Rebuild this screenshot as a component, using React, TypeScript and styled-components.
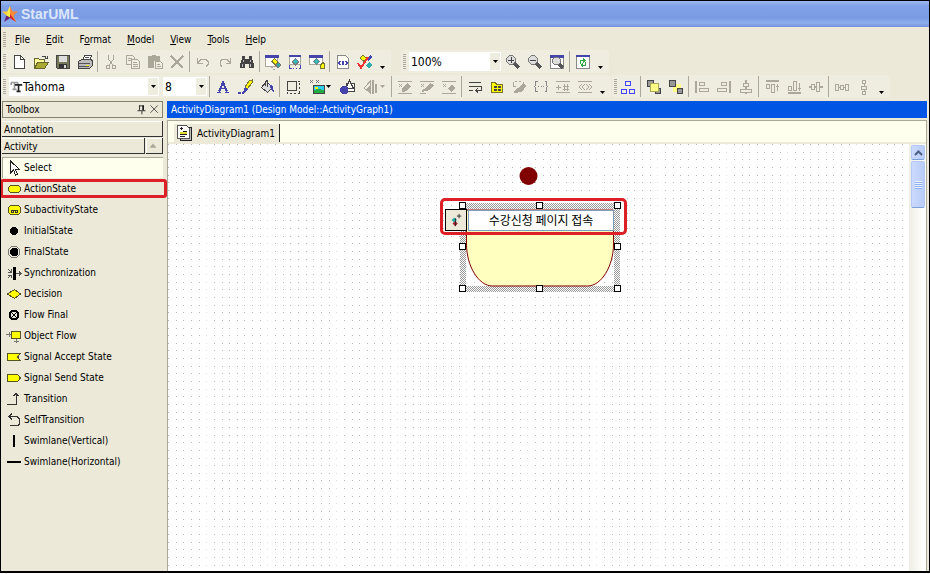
import React from "react";
import styled, { createGlobalStyle } from "styled-components";

const face = "#ece9d8";
const band = "#efeddf";
const grey = "#aca899";
const ink = "#444444";
const navy = "#4444aa";
const red = "#dd2027";
const cream = "#ffffee";
const yellow = "#ffff00";

const GlobalStyle = createGlobalStyle`
  * { box-sizing: border-box; }
  body { margin: 0; background: #fff; }
  body, button, input, select {
    font-family: "DejaVu Sans Condensed", "DejaVu Sans", "Noto Sans CJK KR", sans-serif;
    font-size: 10px;
    color: #000;
  }
  button { margin: 0; padding: 0; border: 0; background: none; }
`;

/* ---------- icons ---------- */

type Shape = [d: string, fill: string, stroke?: string, width?: number];

const icons: Record<string, Shape[]> = {
  new: [["M3.5 1.5h6l4 4v9h-10z", "#fff", ink], ["M9.5 1.5v4h4", "none", ink]],
  open: [
    ["M1.5 14.5v-10h4l1 1h5v3", "#ffff99", "#666633"],
    ["M1.5 14.5l3-6h11l-4 6z", "#aaaa33", "#666633"],
    ["M8.5 3.5c1-2 4-2 5 1M11.5 4.5h3v-3", "none", ink],
  ],
  save: [
    ["M1.5 1.5h13v13h-12l-1-1z", "#77775c", ink],
    ["M4 2h8v6H4z", "#dddddd"],
    ["M4 10h8v4H4z", "#333"],
    ["M9 11h2v3H9z", "#ddd"],
  ],
  print: [
    ["M5.5 6.5l2-5h7l-2 5", "#fff", ink],
    ["M1.5 7.5l3-2h10l1 2v4l-3 3h-11z", "#bbb", ink],
    ["M2 9.5h11M2 12.5h10M8 3.5h4", "none", "#555"],
    ["M9 11h3v1H9z", yellow],
  ],
  cut: [
    ["M5.5 1v4l4 6M10.5 1v4l-4 6", "none", grey],
    ["M3.5 11.5h3v3h-3zM9.5 11.5h3v3h-3z", "none", grey],
  ],
  copy: [
    ["M1.5 1.5h6l2 2v7h-8z", band, grey],
    ["M6.5 5.5h6l2 2v7h-8z", band, grey],
    ["M3 4.5h4M3 6.5h3M8 8.5h4M8 10.5h5M8 12.5h5", "none", grey],
  ],
  paste: [
    ["M1 2h4V1h4v1h4v5H7v7H1z", grey],
    ["M8.5 7.5h5l2 2v5h-7z", band, grey],
    ["M10 10.5h3M10 12.5h4", "none", grey],
  ],
  delete: [["M2 2l12 12M14 2L2 14", "none", grey, 2]],
  undo: [["M2.5 4v5h5M3 8.5l3-3h5l2 2v3l-2 2", "none", grey]],
  redo: [["M13.5 4v5h-5M13 8.5l-3-3H5l-2 2v3l2 2", "none", grey]],
  find: [
    ["M3 2h3v3h4V2h3v3l2 5v4h-5v-4H6v4H1v-4l2-5z", ink],
    ["M3 10v3M4 6v2M11 10v3M11 6v2", "none", "#bbb"],
  ],
  winBrush: [
    ["M.5 2.5h12v10h-12z", "#fff", grey],
    ["M0 1h14v3H0z", navy],
    ["M9 4l4 4-3 4-4-4z", "#777733"],
    ["M9 5l3 3-2 2-3-3z", yellow],
    ["M10 11l3-3 3 3-3 4z", "#777"],
    ["M11 11l2-2 2 2-2 2z", "#33aaaa"],
    ["M6 13h2M8 15h2", "none", "#aaa"],
  ],
  winSelect: [
    ["M2.5 2.5h11v8h-11z", "#fff", grey],
    ["M2 1h12v2H2z", navy],
    ["M8 4l4 4-4 4-3-4z", "#777"],
    ["M8 5l3 3-3 2-2-2z", "#33bbbb"],
    ["M2.5 11v3.5h2M13.5 11v3.5h-2M6 14.5h1M9 14.5h1", "none", navy],
  ],
  winLock: [
    ["M.5 2.5h13v8H.5z", "#fff", grey],
    ["M0 1h14v3H0z", navy],
    ["M7 4l4 4-4 3-3-3z", "#777"],
    ["M7 5l3 3-3 2-2-2z", "#33bbbb"],
    ["M12.5 10.5l1-2h1l1 2v4h-4v-4z", yellow, "#777733"],
  ],
  codePage: [
    ["M2.5 1.5h8l3 3v10h-11z", "#fff", "#888"],
    ["M5.5 7l-2 2 2 2M10.5 7l2 2-2 2M7 7l2 4M9 7l-2 4", "none", navy],
  ],
  verify: [
    ["M2 4l4-3 4 4-3 3z", "#777733"],
    ["M3 4l3-2 3 3-3 1z", yellow],
    ["M9 5l4-4 2 2-3 4z", navy],
    ["M9 11l3-3 3 3-3 4z", "#33aaaa"],
    ["M1 9l3 5L11 3", "none", "#ee3333", 2],
  ],
  zoomIn: [
    ["M9 9l5 5", "none", "#555", 3],
    ["M4.5 1.5h3l3 3v3l-3 3h-3l-3-3v-3z", "#ddd", "#777"],
    ["M3 6h6M6 3v6", "none", "#444"],
  ],
  zoomOut: [
    ["M9 9l5 5", "none", "#555", 3],
    ["M4.5 1.5h3l3 3v3l-3 3h-3l-3-3v-3z", "#ddd", "#777"],
    ["M3 6h6", "none", "#444"],
  ],
  zoomFit: [
    ["M1.5 1.5h13v13h-13z", "#fff", "#888"],
    ["M1 1h14v3H1z", navy],
    ["M10 10l4 4", "none", "#555", 3],
    ["M5.5 3.5h4l2 2v3l-2 2h-4l-2-2v-3z", "#ddd", "#777"],
  ],
  refresh: [
    ["M1.5 1.5h13v13h-13z", "#fff", "#888"],
    ["M1 1h14v2H1z", navy],
    ["M5.5 10V6.5h3M10.5 8v3.5h-3", "none", "#33aa44", 1],
    ["M8 4l3 3-3 2zM8 9l-3 2 3 3z", "#33aa44"],
  ],
  fontColor: [["M4 12.5L8 3.5 12 12.5", "none", navy, 2], ["M5 9.5h6M2 13.5h4M10 13.5h4", "none", navy]],
  lineColor: [
    ["M15 1l-3 1-4 6 2 2 5-6z", yellow, "#777733"],
    ["M8 8l3 2-2 3-3 1z", navy],
    ["M1 13.5h3M5 13.5h2", "none", navy, 2],
  ],
  fill: [
    ["M7.5 2.5l6 6-5 5-6-5z", "#ddd", ink],
    ["M6.5 7V2.5l2-1v6", "none", ink],
    ["M10 5l4 2 1 7-3-4z", navy],
  ],
  autosize: [
    ["M2.5 2.5h9v9h-9z", band, ink],
    ["M13 2.5h2M14.5 4v2M14.5 8v2M14.5 12v2.5h-2M11 14.5H9M7 14.5H5M2.5 13v2", "none", ink],
  ],
  image: [
    ["M1 1l3 3M4 1L1 4M7 1l3 3M10 1L7 4", "none", "#777"],
    ["M4.5 6.5h11v8h-11z", "#33ccee", ink],
    ["M5 11l4-1 6 1v3H5z", "#22aa44"],
    ["M6 8h3v2H6z", yellow],
  ],
  shapes: [
    ["M7.5 4.5h8v8h-8z", "#fff", ink],
    ["M10.5 1.5l4 8h-8z", "#fff", ink],
    ["M3 7h4l2 2v4l-2 2H3l-2-2V9z", navy],
  ],
  flip: [
    ["M10 1v14", "none", grey, 2],
    ["M7.5 2v12L1 9z", band, grey],
    ["M3 10l5-5v9zM12 5h2v9h-2z", grey],
  ],
  hideA: [["M1 2.5h14M1 14.5h14M2 5l3 3M5 5L2 8", "none", grey], ["M5 10l5-6 4 3-4 5-5 1z", grey]],
  hideB: [["M1 2.5h14M1 14.5h6M2 5l3 3M5 5L2 8", "none", grey], ["M7 9l4-5 4 2-4 5-8 2v-2z", grey]],
  hideC: [["M1 2.5h14M1 14.5h14M2 5l3 3M5 5L2 8", "none", grey], ["M7 9l4-4 3 4-4 4z", grey]],
  wrap: [["M2 3.5h12M2 7.5h12v4H9M11 9l-2 2.5 2 2M2 11.5h4", "none", ink]],
  folder: [
    ["M2.5 13.5v-10h4l1 2h6v8z", yellow, "#777722"],
    ["M5 7h3v2H5zM9 7h3v2H9zM5 10h3v2H5zM9 10h3v2H9z", ink],
  ],
  hideD: [["M2.5 3v4h2M4 2.5h2M8 2.5h2M12.5 3v2", "none", grey], ["M7 9l5-5 3 3-4 6-8 1v-2z", grey]],
  braces: [["M4.5 2.5h-2v4l-1 1 1 1v4h2M11.5 2.5h2v4l1 1-1 1v4h-2M5 7.5h1M7.5 7.5h1M10 7.5h1", "none", "#888"]],
  operations: [["M1 2.5h14M1 13.5h14M1 8.5h5M3.5 6v5M8 7h6M8 10h6M9.5 5v7M12.5 5v7", "none", grey]],
  stereotype: [["M1 2.5h14M1 13.5h14M5 5L2 8l3 3M8 5L5 8l3 3M9 5l3 3-3 3M12 5l3 3-3 3", "none", grey]],
  layout: [["M5.5 2.5h5v4h-5zM1.5 10.5h5v4h-5zM9.5 10.5h5v4h-5z", "none", "#4444ff"]],
  front: [
    ["M1.5 1.5h6v6h-6zM9.5 9.5h5v5h-5z", "#999", ink],
    ["M4.5 4.5h8v8h-8z", "#ffff88", "#aaaa55"],
  ],
  back: [
    ["M5 5h8v8H5z", "#ffff88"],
    ["M1.5 1.5h6v6h-6zM9.5 9.5h5v5h-5z", "#999", ink],
  ],
  alignLeft: [["M2 2v12", "none", grey, 2], ["M5.5 3.5h5v3h-5zM5.5 9.5h9v3h-9z", "none", grey]],
  alignRight: [["M14 2v12", "none", grey, 2], ["M5.5 3.5h5v3h-5zM1.5 9.5h9v3h-9z", "none", grey]],
  alignCenter: [["M8 1v3M8 7v3M8 13v2", "none", grey, 2], ["M5.5 4.5h5v3h-5zM2.5 10.5h11v3h-11z", "none", grey]],
  alignTop: [["M2 2h13", "none", grey, 2], ["M2.5 5.5h3v4h-3zM7.5 5.5h3v8h-3zM13.5 5v7M12 7.5h3", "none", grey]],
  alignBottom: [["M2 14h13", "none", grey, 2], ["M2.5 7.5h3v4h-3zM7.5 2.5h3v9h-3zM13.5 4v8M12 9.5h3", "none", grey]],
  alignMiddle: [["M1 8h3M7 8h2M12 8h3", "none", grey, 2], ["M3.5 5.5h3v5h-3zM8.5 3.5h3v9h-3z", "none", grey]],
  spaceH: [["M1.5 5.5h3v6h-3zM6.5 6.5h3v4h-3zM11.5 5.5h3v6h-3zM4 8.5h3M9 8.5h3", "none", grey]],
  spaceV: [["M6.5 1.5h3v3h-3zM5.5 7.5h5v3h-5zM6.5 12.5h3v3h-3zM8 5v2M8 11v1", "none", grey]],
  select: [["M4.5 1v12l3-3 2 5 2-1-2-4.5h4z", "#fff", "#222"]],
  action: [["M4.5 4.5h8l2 2v3l-2 2h-8l-2-2v-3z", yellow, "#555522"]],
  subactivity: [
    ["M4.5 3.5h8l2 2v5l-2 2h-8l-2-2v-5z", yellow, "#555522"],
    ["M5.5 8.5h2v2h-2zM9.5 8.5h2v2h-2zM7 8h3", "none", "#333"],
  ],
  initial: [["M6.5 4h3l2.5 2.5v3L9.5 12h-3L4 9.5v-3z", "#000"]],
  final: [
    ["M5.5 2.5h5l3 3v5l-3 3h-5l-3-3v-5z", "none", "#777"],
    ["M6 4h4l2 2v4l-2 2H6l-2-2V6z", "#000"],
  ],
  sync: [
    ["M8 2v13", "none", "#000", 3],
    ["M10 8.5h5M13 6.5l2 2-2 2M2 4l3 3M5 4v3H2M2 13l3-3M5 13v-3H2", "none", "#555"],
  ],
  decision: [["M8.5 3.5l6 4.5-6 4.5L1.5 8z", yellow, "#555522"]],
  flowFinal: [["M6 4h4l2 2v4l-2 2H6l-2-2V6z", "none", "#000", 2], ["M5 5l6 6M11 5l-6 6", "none", "#000", 1]],
  objectFlow: [
    ["M5.5 3.5h9v7h-9z", yellow, "#555522"],
    ["M0 6.5h5M3.5 4v5M10.5 11v4M8 13.5h5", "none", "#777"],
  ],
  accept: [["M1.5 4.5h13l-3 3.5 3 3.5h-13z", yellow, "#555522"]],
  send: [["M1.5 4.5h10l3 3.5-3 3.5h-10z", yellow, "#555522"]],
  transition: [["M1 13.5h9.5v-12M7 4.5h1l2-2 2 2h1", "none", "#333"]],
  selfTransition: [["M6 1.5l-3 3 3 3M3 4.5h8l2 2v6l-1 1H4", "none", "#333"]],
  vertical: [["M8 2v12", "none", "#000", 2]],
  horizontal: [["M1 8h14", "none", "#000", 2]],
  star: [
    ["M8 0l2.5 5.5H16l-4.500 4L14 16l-6-4", "#ff8833"],
    ["M8 0L5.500 5.500H0l4.500 4", "#ffcc33"],
    ["M4.500 9.500L2 16l6-4V7z", "#662277"],
    ["M8 0v11.500L4.500 9.500l1-4z", "#ffee44"],
    ["M8 8l6 8-6-4z", "#cc2233"],
  ],
  fontType: [
    ["M1 3h9M5.5 3v8M3 11.5h5M1.5 3v3M9.5 3v3", "none", "#999", 2],
    ["M6 6h9M10.5 6v8M8 14h5", "none", "#222", 2],
  ],
  pin: [["M5.5 3v6M5 3.5h6M3 9.5h10M8.5 10v4", "none", "#111"], ["M10 3v6", "none", "#111", 2]],
  close: [["M3 3l9 9M12 3l-9 9", "none", "#333", 1]],
  up: [["M8 5l4 5H4z", grey]],
  document: [
    ["M4.5 2.5h11v13h-11z", "#bbb", "#222"],
    ["M1.5.5h9l3 3v10h-12z", "#fff", "#555"],
    ["M4 7h7v2H4z", "#dddd33"],
    ["M4 3.5h3M5.5 2v3M4 9.5h7M4 11.5h5M7 6.5h4", "none", "#222"],
  ],
  dot: [["M6 5l3 3-3 3-3-3z", "#22aaaa"], ["M7 9l3 3-3 3-3-3z", "#aa2233"], ["M11.5 1v5M9 3.5h5M7.5 6v9", "none", "#222"]],
};

const Svg = styled.svg`
  display: block;
  flex: none;
`;

function Icon({ name, size = 16 }: { name: string; size?: number }) {
  const crisp = size === 16 && name !== "star";
  return (
    <Svg width={size} height={size} viewBox="0 0 16 16" shapeRendering={crisp ? "crispEdges" : "auto"} aria-hidden="true">
      {icons[name].map(([d, fill, stroke, width], i) => (
        <path key={i} d={d} fill={fill} stroke={stroke ?? "none"} strokeWidth={width ?? 1} />
      ))}
    </Svg>
  );
}

/* ---------- window ---------- */

const Window = styled.div`
  display: flex;
  flex-direction: column;
  height: calc(100vh - 1px);
  border: 1px solid #000;
  border-bottom-width: 2px;
  background: ${face};
  overflow: hidden;
`;

const TitleBar = styled.header`
  display: flex;
  align-items: center;
  gap: 3px;
  height: 26px;
  padding: 0 1px;
  flex: none;
  background: linear-gradient(#9db9f0, #7f9fe6 20%, #7b9ce4 65%, #8caeee 85%, #7591d8);
  color: #dbe6fb;
  font: bold 14px "Liberation Sans", sans-serif;
`;

const Grip = styled.span`
  flex: none;
  width: 3px;
  height: 15px;
  background: repeating-linear-gradient(${grey} 0 1px, transparent 1px 2px);
`;

const MenuBar = styled.nav`
  display: flex;
  align-items: center;
  gap: 16px;
  height: 23px;
  padding: 2px 0 0 2px;
  flex: none;
`;

const MenuItem = styled.button`
  line-height: 16px;
  &:first-of-type { margin-left: -7px; }
`;

const ToolRow = styled.div<{ $gap: number }>`
  display: flex;
  gap: ${(p) => p.$gap}px;
  height: 23px;
  margin-bottom: 2px;
  flex: none;
`;

const Band = styled.div`
  display: flex;
  align-items: center;
  padding: 0 2px;
  background: ${band};
  border-radius: 3px;
`;

const Spacer = styled.span`
  width: 2px;
`;

const Tool = styled.button<{ $wide?: boolean }>`
  display: flex;
  align-items: center;
  justify-content: center;
  gap: 1px;
  width: ${(p) => (p.$wide ? 32 : 22)}px;
  height: 23px;
  flex: none;
`;

const Divider = styled.span`
  flex: none;
  width: 1px;
  height: 21px;
  margin: 0 2px 0 1px;
  background: ${grey};
`;

const Overflow = styled.button`
  display: flex;
  align-items: flex-end;
  justify-content: center;
  width: 13px;
  height: 15px;
`;

const Combo = styled.label<{ $width: number; $indent: number }>`
  display: grid;
  grid-template-columns: 16px 1fr 10px;
  align-items: center;
  width: ${(p) => p.$width}px;
  height: 19px;
  margin: 0 1px 0 3px;
  background: linear-gradient(to left, ${band} 10px, #fff 10px);
  border: 1px solid #fff;
  > * { grid-row: 1; }
  > select {
    grid-column: 1 / -1;
    width: 100%;
    height: 17px;
    padding: 0 0 0 ${(p) => p.$indent}px;
    border: 0;
    background: none;
    appearance: none;
    font-size: 12px;
    outline: 0;
  }
  > svg { pointer-events: none; grid-column: 1; }
  > svg:last-child { grid-column: 3; justify-self: center; }
`;

function Arrow({ color = "#000" }: { color?: string }) {
  return (
    <Svg width="5" height="3" viewBox="0 0 5 3" aria-hidden="true">
      <path d="M0 0h5L2.5 3z" fill={color} />
    </Svg>
  );
}

const Main = styled.main`
  display: flex;
  flex: 1;
  min-height: 0;
  padding-top: 1px;
`;

/* ---------- toolbox ---------- */

const Sidebar = styled.aside`
  flex: none;
  width: 166px;
  padding: 0 4px 0 1px;
`;

const PanelHead = styled.div`
  display: flex;
  align-items: center;
  height: 17px;
  padding: 0 1px 0 3px;
  border: 1px solid #85826f;
  > span { flex: 1; }
`;

const Section = styled.div<{ $top: number }>`
  display: flex;
  height: 16px;
  margin-top: ${(p) => p.$top}px;
`;

const SectionName = styled.button`
  flex: 1;
  padding: 2px 0 0 2px;
  text-align: left;
  line-height: 13px;
  border: solid #333;
  border-width: 0 1px 1px 0;
  box-shadow: inset 0 1px #fff;
`;

const SectionUp = styled.button`
  width: 17px;
  margin-left: 1px;
  border: solid #333;
  border-width: 0 1px 1px 0;
  box-shadow: inset 1px 1px #fff;
`;

const ItemList = styled.ul`
  list-style: none;
  margin: 3px 0 0;
  padding: 0;
`;

const Item = styled.button<{ $active?: boolean }>`
  display: flex;
  align-items: center;
  gap: 2px;
  width: 100%;
  height: 21px;
  padding-left: 4px;
  background: ${(p) => (p.$active ? cream : "none")};
  box-shadow: ${(p) => (p.$active ? `inset 1px 1px ${grey}` : "none")};
`;

const Marked = styled.li`
  position: relative;
  &::after {
    content: "";
    position: absolute;
    inset: 1px -4px 1px -2px;
    border: 3px solid ${red};
    border-radius: 3px;
    pointer-events: none;
  }
`;

/* ---------- editor ---------- */

const Editor = styled.section`
  display: flex;
  flex-direction: column;
  flex: 1;
  min-width: 0;
  margin-right: 2px;
`;

const EditorTitle = styled.div`
  height: 17px;
  padding: 1px 0 0 4px;
  line-height: 16px;
  background: #0055e5;
  color: #fff;
  flex: none;
`;

const EditorBody = styled.div`
  display: flex;
  flex-direction: column;
  flex: 1;
  min-height: 0;
  margin-top: 2px;
  border: solid ${grey};
  border-width: 1px 1px 0 1px;
`;

const Tabs = styled.div`
  display: flex;
  align-items: flex-end;
  height: 23px;
  padding-left: 6px;
  flex: none;
  background: ${cream};
  border-bottom: 2px solid ${face};
`;

const Tab = styled.button`
  display: flex;
  align-items: center;
  gap: 5px;
  height: 18px;
  padding: 0 4px 0 2px;
  background: ${face};
  border-right: 1px solid #222;
`;

const Workspace = styled.div`
  display: flex;
  flex: 1;
  min-height: 0;
`;

const Canvas = styled.div`
  position: relative;
  flex: 1;
  overflow: hidden;
  background: #fff;
`;

const Drawing = styled.svg`
  position: absolute;
  inset: 0;
  width: 100%;
  height: 100%;
`;

const LabelEditor = styled.div`
  position: absolute;
  left: 272px;
  top: 54px;
  display: flex;
  align-items: flex-end;
  width: 187px;
  height: 37px;
  padding: 0 10px 1px 2px;
  gap: 1px;
  border: 3px solid ${red};
  border-radius: 5px;
`;

const LinkButton = styled.button`
  display: grid;
  place-items: center;
  width: 22px;
  height: 22px;
  flex: none;
  border: 1px solid #000;
  background: ${face};
`;

const LabelInput = styled.input`
  flex: 1;
  min-width: 0;
  height: 21px;
  padding: 0 0 3px;
  border: 1px solid #7f9db9;
  background: #fff;
  text-align: center;
  font-family: "Noto Sans CJK KR", sans-serif;
  font-size: 12px;
  outline: 0;
`;

const ScrollBar = styled.div`
  display: flex;
  flex-direction: column;
  gap: 1px;
  width: 17px;
  flex: none;
  padding: 1px 1px 0 2px;
  background: linear-gradient(to right, #eeede5, #fefefb 80%);
`;

const ScrollPart = styled.button<{ $height: number }>`
  display: grid;
  place-items: center;
  height: ${(p) => p.$height}px;
  border: 1px solid #b4c8f6;
  border-bottom-color: #7d9fe0;
  border-radius: 2px;
  background: linear-gradient(to right, #cbdafd, #b9cbf9);
`;

/* ---------- data ---------- */

const menus: [string, string, string][] = [
  ["", "F", "ile"], ["", "E", "dit"], ["F", "o", "rmat"], ["", "M", "odel"],
  ["", "V", "iew"], ["", "T", "ools"], ["", "H", "elp"],
];

const fileTools = [
  "new", "open", "save", "print", "|", "cut", "copy", "paste", "delete", "|",
  "undo", "redo", "find", "|", "winBrush", "winSelect", "winLock", "|", "codePage", "verify",
];
const zoomTools = ["zoomIn", "zoomOut", "zoomFit", "|", "refresh"];
const formatTools = [
  "|", "fontColor", "lineColor", "fill", "|", "autosize", "image+", "shapes", "flip+", "|",
  "hideA", "hideB", "hideC", "|", "wrap", "folder", "hideD", "braces", "operations", "stereotype",
];
const alignTools = [
  "layout", "|", "front", "back", "|", "alignLeft", "alignRight", "alignCenter", "|",
  "alignTop", "alignBottom", "alignMiddle", "|", "spaceH", "spaceV",
];

const toolboxItems: [string, string][] = [
  ["select", "Select"], ["action", "ActionState"], ["subactivity", "SubactivityState"],
  ["initial", "InitialState"], ["final", "FinalState"], ["sync", "Synchronization"],
  ["decision", "Decision"], ["flowFinal", "Flow Final"], ["objectFlow", "Object Flow"],
  ["accept", "Signal Accept State"], ["send", "Signal Send State"], ["transition", "Transition"],
  ["selfTransition", "SelfTransition"], ["vertical", "Swimlane(Vertical)"],
  ["horizontal", "Swimlane(Horizontal)"],
];

function Tools({ names }: { names: string[] }) {
  return (
    <>
      {names.map((name, i) => {
        if (name === "|") return <Divider key={i} />;
        const wide = name.endsWith("+");
        const id = name.replace("+", "");
        return (
          <Tool key={i} $wide={wide} aria-label={id}>
            <Icon name={id} />
            {wide && <Arrow color={id === "flip" ? grey : "#000"} />}
          </Tool>
        );
      })}
      <Overflow aria-label="More"><Arrow /></Overflow>
    </>
  );
}

function Picker({ label, value, width, icon }: { label: string; value: string; width: number; icon?: string }) {
  return (
    <Combo $width={width} $indent={icon ? 13 : 1}>
      <select aria-label={label} defaultValue={value}><option>{value}</option></select>
      {icon && <Icon name={icon} size={13} />}
      <Arrow />
    </Combo>
  );
}

const steps = Array.from({ length: 17 }, (_, i) => Math.round((i * 130) / 17));
const handles = [459, 536, 614]
  .flatMap((x) => [202, 243, 285].map((y) => [x - 168, y - 144]))
  .filter((_, i) => i !== 4);

function Diagram() {
  return (
    <Drawing aria-hidden="true">
      <defs>
        <pattern id="grid" width="130" height="130" patternUnits="userSpaceOnUse">
          {steps.flatMap((x, i) =>
            steps.map((y) => (
              <rect key={`${x}-${y}`} x={x} y={y} width="1" height="1" fill={i === 5 || i === 13 ? "#dddddd" : "#b8b8b8"} />
            )),
          )}
        </pattern>
        <pattern id="hatch" width="2" height="2" patternUnits="userSpaceOnUse">
          <rect width="2" height="2" fill="#fff" />
          <rect width="1" height="1" fill="#999" />
          <rect x="1" y="1" width="1" height="1" fill="#999" />
        </pattern>
      </defs>
      <rect width="100%" height="100%" fill="url(#grid)" />
      <circle cx="360.5" cy="32" r="9" fill="#800000" />
      <path d="M292 59h160v89H292zM298 65v77h148V65z" fill="url(#hatch)" fillRule="evenodd" />
      <path
        d="M298.5 100V66h147v34c0 22-12 42-26 42h-95c-14 0-26-20-26-42z"
        fill="#ffffbf"
        stroke="#800000"
      />
      {handles.map(([x, y]) => (
        <rect key={`${x}-${y}`} x={x + 0.5} y={y + 0.5} width="6" height="6" fill="#fff" stroke="#000" />
      ))}
    </Drawing>
  );
}

export default function App() {
  return (
    <>
      <GlobalStyle />
      <Window>
        <TitleBar><Icon name="star" />StarUML</TitleBar>
        <MenuBar>
          <Grip />
          {menus.map(([before, key, after]) => (
            <MenuItem key={before + key + after}>{before}<u>{key}</u>{after}</MenuItem>
          ))}
        </MenuBar>
        <ToolRow $gap={10}>
          <Band><Grip /><Spacer /><Tools names={fileTools} /></Band>
          <Band><Grip /><Picker label="Zoom" value="100%" width={92} /><Tools names={zoomTools} /></Band>
        </ToolRow>
        <ToolRow $gap={1}>
          <Band>
            <Grip />
            <Picker label="Font" value="Tahoma" width={150} icon="fontType" />
            <Picker label="Font size" value="8" width={44} />
            <Tools names={formatTools} />
          </Band>
          <Band><Grip /><Tools names={alignTools} /></Band>
        </ToolRow>
        <Main>
          <Sidebar>
            <PanelHead>
              <span>Toolbox</span>
              <button aria-label="Pin"><Icon name="pin" size={13} /></button>
              <button aria-label="Close"><Icon name="close" size={13} /></button>
            </PanelHead>
            <Section $top={3}><SectionName>Annotation</SectionName></Section>
            <Section $top={1}>
              <SectionName>Activity</SectionName>
              <SectionUp aria-label="Scroll up"><Icon name="up" size={14} /></SectionUp>
            </Section>
            <ItemList>
              {toolboxItems.map(([icon, name]) => {
                const Row = name === "ActionState" ? Marked : "li";
                return (
                  <Row key={name}>
                    <Item $active={name === "Select"}><Icon name={icon} />{name}</Item>
                  </Row>
                );
              })}
            </ItemList>
          </Sidebar>
          <Editor>
            <EditorTitle>ActivityDiagram1 (Design Model::ActivityGraph1)</EditorTitle>
            <EditorBody>
              <Tabs><Tab><Icon name="document" />ActivityDiagram1</Tab></Tabs>
              <Workspace>
                <Canvas>
                  <Diagram />
                  <LabelEditor>
                    <LinkButton aria-label="Link"><Icon name="dot" size={14} /></LinkButton>
                    <LabelInput aria-label="State name" defaultValue="수강신청 페이지 접속" />
                  </LabelEditor>
                </Canvas>
                <ScrollBar>
                  <ScrollPart $height={15} aria-label="Scroll up">
                    <Svg width="9" height="6" viewBox="0 0 9 6"><path d="M1 5l3.5-3.5L8 5" fill="none" stroke="#4d6185" strokeWidth="2" /></Svg>
                  </ScrollPart>
                  <ScrollPart $height={47} aria-label="Scroll thumb">
                    <Svg width="7" height="8" viewBox="0 0 7 8"><path d="M0 .5h7M0 2.5h7M0 4.5h7M0 6.5h7" stroke="#eef4fe" /><path d="M0 1.5h7M0 3.5h7M0 5.5h7M0 7.5h7" stroke="#8cb0f8" /></Svg>
                  </ScrollPart>
                </ScrollBar>
              </Workspace>
            </EditorBody>
          </Editor>
        </Main>
      </Window>
    </>
  );
}
